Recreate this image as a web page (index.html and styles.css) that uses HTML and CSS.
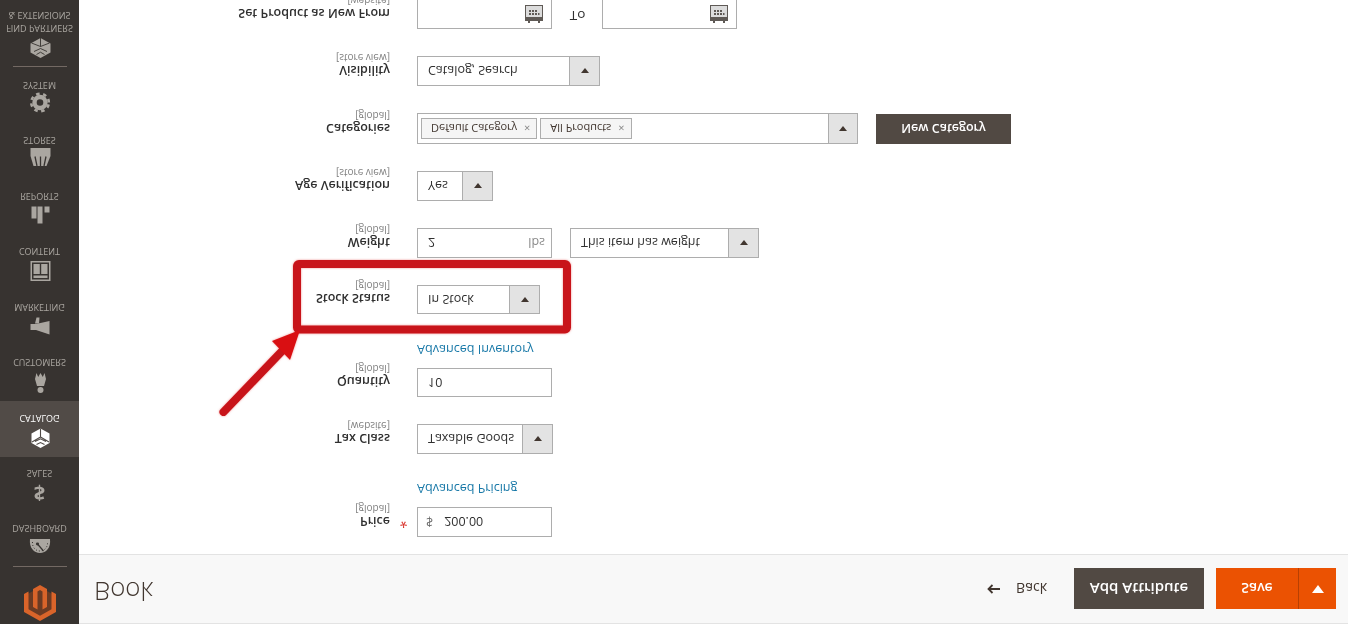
FILE: index.html
```html
<!DOCTYPE html>
<html lang="en">

<head>
    <meta charset="UTF-8">
    <meta name="viewport" content="width=device-width, initial-scale=1.0">
    <title>Book / Products / Catalog</title>
    <link rel="stylesheet" href="styles.css">
</head>

<body>

    <div class="page">

        <!-- Side menu -->
        <nav class="menu">
            <div class="logo">
                <svg width="32" height="36" viewBox="0 0 32 36">
                    <path class="logo-back" d="M16 2L30 10V26L16 34L2 26V10Z"/>
                    <path class="logo-shape" d="M16 0L32 9V27L27.5 29.6V11.7L16 5.2L4.5 11.7V29.6L0 27V9Z"/>
                    <path class="logo-shape" d="M16 36L9 32V14L13.5 11.4V29.5L16 31L18.5 29.5V11.4L23 14V32Z"/>
                </svg>
            </div>
            <a class="menu-item first">
                <svg class="menu-icon" width="22" height="22" viewBox="0 0 22 22">
                    <path d="M1 18C0 9 5 4 11 4S22 9 21 18Z"/>
                    <path class="cut" d="M8.500 13L14.500 6" stroke-width="1.200"/>
                    <circle class="hole" cx="8.500" cy="13" r="1.600"/>
                    <path class="cut" d="M3.500 15C3 10 6.500 6 11 6S19 10 18.500 15" stroke-width="1" stroke-dasharray="1 2"/>
                </svg>
                <span>Dashboard</span>
            </a>
            <a class="menu-item">
                <span class="dollar">$</span>
                <span>Sales</span>
            </a>
            <a class="menu-item active">
                <svg class="menu-icon" width="22" height="22" viewBox="0 0 22 22">
                    <path d="M11.500 -1L20.500 4V13.500L11.500 18.500L2.500 13.500V4Z"/>
                    <path class="cut" d="M11.500 10V18.500M11.500 10L3 5M11.500 10L20 5M6 5.500L11.500 8.200L17 5.500M7.500 2.500L11.500 4.500L15.500 2.500" stroke-width="1.100"/>
                </svg>
                <span>Catalog</span>
            </a>
            <a class="menu-item">
                <svg class="menu-icon" width="22" height="22" viewBox="0 0 22 22">
                    <circle cx="11.500" cy="1" r="3"/>
                    <path d="M8 5H15L17 12L15.500 18L13.800 14L11.500 18L9.200 14L7.500 18L6 12Z"/>
                </svg>
                <span>Customers</span>
            </a>
            <a class="menu-item">
                <svg class="menu-icon" width="22" height="22" viewBox="0 0 22 22">
                    <path d="M20.500 1.500V15L7 12H1.500V6H7Z"/>
                    <path d="M6 12.500H10L10.500 18.500H7.500Z"/>
                </svg>
                <span>Marketing</span>
            </a>
            <a class="menu-item">
                <svg class="menu-icon" width="22" height="22" viewBox="0 0 22 22">
                    <path fill-rule="evenodd" d="M1.500 -1H21.500V19H1.500ZM3 0.500V17.500H20V0.500Z"/>
                    <path d="M4.500 2H18.500V4.500H4.500ZM4.500 6H10.800V16H4.500ZM12.200 6H18.500V16H12.200Z"/>
                </svg>
                <span>Content</span>
            </a>
            <a class="menu-item">
                <svg class="menu-icon" width="22" height="22" viewBox="0 0 22 22">
                    <path d="M2.500 6.500H7.500V18.500H2.500ZM8.500 1.500H13.500V18.500H8.500ZM15.500 12.500H20.500V18.500H15.500Z"/>
                </svg>
                <span>Reports</span>
            </a>
            <a class="menu-item">
                <svg class="menu-icon" width="22" height="22" viewBox="0 0 22 22">
                    <path d="M4.500 3H17.500L21.500 13V21H1.500V13Z"/>
                    <path class="cut" d="M8 3L6 12.500M11.500 3V12.500M15 3L17 12.500" stroke-width="1.300"/>
                </svg>
                <span>Stores</span>
            </a>
            <a class="menu-item">
                <svg class="menu-icon" width="22" height="22" viewBox="0 0 22 22">
                    <circle class="gear-ring" cx="11" cy="11.500" r="5.500"/>
                    <circle class="gear-teeth" cx="11" cy="11.500" r="8.800"/>
                </svg>
                <span>System</span>
            </a>
            <a class="menu-item last">
                <svg class="menu-icon" width="22" height="22" viewBox="0 0 22 22">
                    <path d="M11.500 -1L21.500 4.500V13.500L11.500 19L1.500 13.500V4.500Z"/>
                    <path class="cut" d="M11.500 10.500V19M11.500 10.500L2.500 14M11.500 10.500L20.500 14M5 5.500L11.500 8.500L18 5.500M7.500 2.500L11.500 4.800L15.500 2.500" stroke-width="0.900"/>
                </svg>
                <span>Find Partners<br>&amp; Extensions</span>
            </a>
        </nav>

        <div class="main">

            <!-- Title and actions -->
            <header class="title-bar">
                <h1 class="title">Book</h1>
                <div class="actions">
                    <a class="back">
                        <svg class="back-arrow" width="13" height="10" viewBox="0 0 13 10">
                            <path d="M13 5H1.500M5.500 1L1.500 5L5.500 9"/>
                        </svg>Back</a>
                    <button class="btn btn-dark btn-attr">Add Attribute</button>
                    <div class="save">
                        <button class="btn save-main">Save</button>
                        <button class="btn save-toggle"><i class="tri tri-white"></i></button>
                    </div>
                </div>
            </header>

            <!-- Product form -->
            <form class="form">
                <div class="field">
                    <div class="label">Price<small>[global]</small></div>
                    <div class="mark">*</div>
                    <div class="control w-135"><span class="addon">$</span><span class="val">200.00</span></div>
                </div>
                <div class="link-row"><a>Advanced Pricing</a></div>

                <div class="field">
                    <div class="label">Tax Class<small>[website]</small></div>
                    <div class="mark"></div>
                    <div class="control w-136"><span class="val grow">Taxable Goods</span><span class="drop"><i class="tri"></i></span></div>
                </div>

                <div class="field short">
                    <div class="label">Quantity<small>[global]</small></div>
                    <div class="mark"></div>
                    <div class="control w-135"><span class="val">10</span></div>
                </div>
                <div class="link-row wide"><a>Advanced Inventory</a></div>

                <div class="field short">
                    <div class="label">Stock Status<small>[global]</small></div>
                    <div class="mark"></div>
                    <div class="control w-123"><span class="val grow">In Stock</span><span class="drop"><i class="tri"></i></span></div>
                </div>

                <div class="field">
                    <div class="label">Weight<small>[global]</small></div>
                    <div class="mark"></div>
                    <div class="control w-135"><span class="val grow">2</span><span class="unit">lbs</span></div>
                    <div class="control w-189 next"><span class="val grow">This item has weight</span><span class="drop"><i class="tri"></i></span></div>
                </div>

                <div class="field">
                    <div class="label">Age Verification<small>[store view]</small></div>
                    <div class="mark"></div>
                    <div class="control w-76"><span class="val grow">Yes</span><span class="drop"><i class="tri"></i></span></div>
                </div>

                <div class="field tall">
                    <div class="label">Categories<small>[global]</small></div>
                    <div class="mark"></div>
                    <div class="control w-441">
                        <div class="tags grow">
                            <span class="tag">Default Category<b>×</b></span>
                            <span class="tag">All Products<b>×</b></span>
                        </div>
                        <span class="drop"><i class="tri"></i></span>
                    </div>
                    <button class="btn btn-dark btn-cat" type="button">New Category</button>
                </div>

                <div class="field">
                    <div class="label">Visibility<small>[store view]</small></div>
                    <div class="mark"></div>
                    <div class="control w-183"><span class="val grow">Catalog, Search</span><span class="drop"><i class="tri"></i></span></div>
                </div>

                <div class="field">
                    <div class="label">Set Product as New From<small>[website]</small></div>
                    <div class="mark"></div>
                    <div class="control w-135 date">
                        <svg width="18" height="18" viewBox="0 0 18 18">
                            <path class="cal-body" d="M0 2H18V18H0Z"/>
                            <path class="cal" fill-rule="evenodd" d="M3 0H5V2H13V0H15V2H18V18H0V2H3ZM1 6V17H17V6Z"/>
                            <path class="cal" d="M4 8H6V10H4ZM7 8H9V10H7ZM10 8H12V10H10ZM13 8H14.500V10H13ZM4 11H6V13H4ZM7 11H9V13H7ZM10 11H12V13H10Z"/>
                        </svg>
                    </div>
                    <div class="to">To</div>
                    <div class="control w-135 date">
                        <svg width="18" height="18" viewBox="0 0 18 18">
                            <path class="cal-body" d="M0 2H18V18H0Z"/>
                            <path class="cal" fill-rule="evenodd" d="M3 0H5V2H13V0H15V2H18V18H0V2H3ZM1 6V17H17V6Z"/>
                            <path class="cal" d="M4 8H6V10H4ZM7 8H9V10H7ZM10 8H12V10H10ZM13 8H14.500V10H13ZM4 11H6V13H4ZM7 11H9V13H7ZM10 11H12V13H10Z"/>
                        </svg>
                    </div>
                </div>
            </form>
        </div>

        <!-- Red callout drawn over the form -->
        <svg class="callout" width="1348" height="624" viewBox="0 0 1348 624">
            <rect class="callout-box" x="297" y="294.500" width="270" height="65.500" rx="2"/>
            <path class="callout-line" d="M223.500 212L285 276"/>
            <path class="callout-head" d="M300 294L272 283L290 264Z"/>
        </svg>
    </div>

</body>
</html>
```

FILE: styles.css
```css
* {
    box-sizing: border-box;
}

html,
body {
    margin: 0;
    padding: 0;
    background: #fff;
}

/* the whole screen is shown upside down */
.page {
    position: relative;
    display: flex;
    width: 1348px;
    height: 624px;
    overflow: hidden;
    transform: scaleY(-1);
    font-family: "Open Sans", "Liberation Sans", sans-serif;
    color: #303030;
}

/* Side menu */
.menu {
    flex: 0 0 79px;
    display: flex;
    flex-direction: column;
    background: #373330;
    color: #aaa6a0;
    font-size: 9px;
    text-transform: uppercase;
    text-align: center;
}

.logo {
    flex: 0 0 56px;
    display: flex;
    justify-content: center;
    padding-top: 3px;
}

.logo-shape {
    fill: #d9642a;
}

.logo-back {
    fill: #6a3b24;
}

.menu-item {
    position: relative;
    flex: 0 0 55.5px;
    display: flex;
    flex-direction: column;
    align-items: center;
    padding-top: 10px;
    line-height: 13px;
}

.menu-item.first {
    border-top: 1px solid transparent;
}

.menu-item.first::before,
.menu-item.last::before {
    content: "";
    position: absolute;
    top: 0;
    left: 13px;
    right: 12px;
    height: 1px;
    background: #736963;
}

.menu-item.last {
    margin-top: 1px;
}

.menu-item.active {
    background: #514b47;
    color: #fff;
}

.menu-icon {
    flex: none;
    overflow: visible;
    fill: currentColor;
}

.menu-icon .cut {
    fill: none;
    stroke: #373330;
}

.menu-item.active .cut {
    stroke: #514b47;
}

.menu-icon .hole {
    fill: #373330;
}

.gear-ring {
    fill: none;
    stroke: currentColor;
    stroke-width: 4.4;
}

.gear-teeth {
    fill: none;
    stroke: currentColor;
    stroke-width: 2.6;
    stroke-dasharray: 3.5 3.57;
}

.dollar {
    height: 22px;
    font-size: 20px;
    font-weight: 700;
    line-height: 18px;
}

/* Main column */
.main {
    flex: 1;
    min-width: 0;
}

.title-bar {
    display: flex;
    align-items: center;
    justify-content: space-between;
    height: 70px;
    padding: 0 12px 0 15px;
    background: #f8f8f8;
    border-top: 1px solid #e3e3e3;
    border-bottom: 1px solid #e3e3e3;
}

.title {
    margin: 0 0 6px;
    font-size: 25.8px;
    font-weight: 300;
    color: #41362f;
}

.actions {
    display: flex;
    align-items: center;
}

.back {
    display: flex;
    align-items: center;
    margin-right: 27px;
    font-size: 14px;
    color: #41362f;
}

.back-arrow {
    margin-right: 16px;
    fill: none;
    stroke: #41362f;
    stroke-width: 1.8;
}

.btn {
    border: 0;
    padding: 0;
    font-family: inherit;
    font-size: 14px;
    font-weight: 600;
    color: #fff;
}

.btn-dark {
    background: #514943;
}

.btn-attr {
    width: 130px;
    height: 41px;
    margin-right: 12px;
    font-size: 15px;
}

.save {
    display: flex;
    width: 120px;
    height: 41px;
    background: #eb5202;
}

.save-main {
    flex: 1;
    background: none;
}

.save-toggle {
    flex: 0 0 38px;
    display: flex;
    align-items: center;
    justify-content: center;
    background: none;
    border-left: 1px solid #b84002;
}

.tri {
    display: block;
    width: 0;
    height: 0;
    border-left: 4px solid transparent;
    border-right: 4px solid transparent;
    border-top: 5px solid #41362f;
}

.tri-white {
    border-left-width: 6px;
    border-right-width: 6px;
    border-top: 8px solid #fff;
}

/* Form rows */
.form {
    display: flex;
    flex-direction: column;
    padding-top: 17px;
}

.field {
    display: flex;
    flex: none;
    height: 30px;
    margin-bottom: 27px;
}

.field.short {
    height: 29px;
}

.field.tall {
    height: 31px;
}

.label {
    flex: 0 0 311px;
    padding-top: 8px;
    text-align: right;
    font-size: 12.5px;
    font-weight: 600;
    line-height: 15px;
    white-space: nowrap;
}

.label small {
    display: block;
    font-size: 10px;
    font-weight: 400;
    line-height: 11px;
    color: #808080;
}

.mark {
    flex: 0 0 27px;
    padding-top: 5px;
    text-align: center;
    font-size: 14px;
    color: #d9352e;
}

.control {
    display: flex;
    align-items: center;
    background: #fff;
    border: 1px solid #adadad;
    font-size: 12.5px;
}

.w-76 { width: 76px; }
.w-123 { width: 123px; }
.w-135 { width: 135px; }
.w-136 { width: 136px; }
.w-183 { width: 183px; }
.w-189 { width: 189px; }
.w-441 { width: 441px; }

.next {
    margin-left: 18px;
}

.val {
    padding-left: 10px;
    white-space: nowrap;
}

.grow {
    flex: 1;
    min-width: 0;
}

.addon {
    padding-left: 8px;
    margin-right: 1px;
    color: #6a6a6a;
}

.unit {
    padding-right: 6px;
    color: #8a8a8a;
}

.drop {
    flex: 0 0 30px;
    align-self: stretch;
    display: flex;
    align-items: center;
    justify-content: center;
    background: #e3e3e3;
    border-left: 1px solid #adadad;
}

.w-441 .drop {
    flex-basis: 29px;
}

.tags {
    display: flex;
    gap: 3px;
    padding-left: 3px;
}

.tag {
    display: flex;
    align-items: center;
    height: 21px;
    padding-left: 9px;
    padding-right: 6px;
    background: #f5f5f5;
    border: 1px solid #adadad;
    font-size: 11px;
    color: #41362f;
    white-space: nowrap;
}

.tag b {
    margin-left: 7px;
    font-weight: 400;
    color: #8a8a8a;
}

.btn-cat {
    align-self: flex-start;
    width: 135px;
    height: 30px;
    margin-left: 18px;
    font-size: 12.5px;
}

.date {
    justify-content: flex-end;
    padding-right: 8px;
}

.cal {
    fill: #5f5a56;
}

.cal-body {
    fill: #dcdcdc;
}

.to {
    flex: 0 0 50px;
    padding: 4px 0 0 1px;
    text-align: center;
    font-size: 13.5px;
}

.link-row {
    flex: none;
    height: 20px;
    margin: -18px 0 24px;
    padding-left: 338px;
    font-size: 12.6px;
    line-height: 20px;
    color: #1979a8;
}

.link-row.wide {
    margin-bottom: 25px;
}

/* Callout */
.callout {
    position: absolute;
    top: 0;
    left: 0;
    filter: drop-shadow(0 0 1px rgba(230, 40, 40, 0.5));
}

.callout-box {
    fill: none;
    stroke: #c8141a;
    stroke-width: 8;
}

.callout-line {
    fill: none;
    stroke: #c8141a;
    stroke-width: 8;
    stroke-linecap: round;
}

.callout-head {
    fill: #d90f12;
}
```
